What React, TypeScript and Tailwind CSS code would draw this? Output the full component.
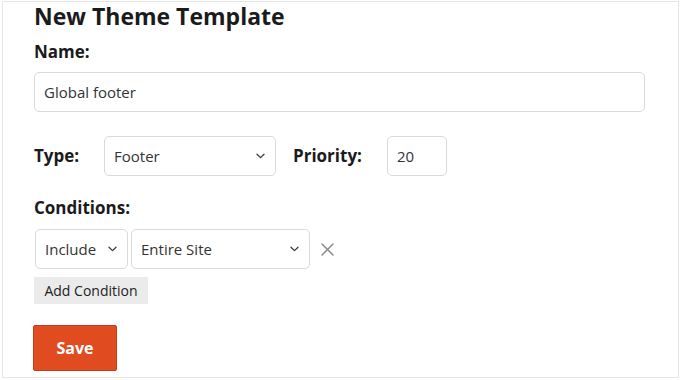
import React from 'react';

function Chevron() {
  return (
    <svg width="9" height="6" viewBox="0 0 9 6" fill="none" className="shrink-0">
      <path d="M1 1.2 L4.5 4.6 L8 1.2" stroke="#3a3a3a" strokeWidth="1.3" strokeLinecap="round" strokeLinejoin="round" />
    </svg>
  );
}

function SelectBox({ value, className }: { value: string; className: string }) {
  return (
    <div
      className={`flex h-10 items-center justify-between rounded-[5px] border border-[#dadada] bg-white pl-[9px] pr-[10px] text-[15px] text-[#333] ${className}`}
    >
      <span>{value}</span>
      <Chevron />
    </div>
  );
}

export default function App() {
  return (
    <div className="h-[380px] w-[680px] bg-white pl-[2px] pt-[1px] font-['Open_Sans','Noto_Sans',sans-serif]">
      <div className="h-[377px] w-[677px] border border-[#e6e6e6] pl-[31px]">
        <h1 className="text-[23px] font-bold leading-[28px] text-[#1b1b1b]">New Theme Template</h1>

        <div className="mt-[10px] text-[17px] font-bold leading-6 text-[#1b1b1b]">Name:</div>
        <div className="mt-2 flex h-10 w-[611px] items-center rounded-[5px] border border-[#dadada] pl-[9px] text-[15px] text-[#333]">
          Global footer
        </div>

        <div className="mt-6 flex h-10 items-center">
          <div className="w-[70px] text-[17px] font-bold text-[#1b1b1b]">Type:</div>
          <SelectBox value="Footer" className="w-[172px]" />
          <div className="ml-[17px] w-[94px] text-[17px] font-bold text-[#1b1b1b]">Priority:</div>
          <div className="flex h-10 w-[60px] items-center rounded-[5px] border border-[#dadada] pl-[9px] text-[15px] text-[#333]">
            20
          </div>
        </div>

        <div className="mt-5 text-[17px] font-bold leading-6 text-[#1b1b1b]">Conditions:</div>
        <div className="mt-[9px] flex items-center">
          <SelectBox value="Include" className="ml-px w-[93px]" />
          <SelectBox value="Entire Site" className="ml-[3px] w-[179px]" />
          <svg width="13" height="13" viewBox="0 0 13 13" className="ml-[11px]">
            <path d="M1 1 L12 12 M12 1 L1 12" stroke="#8a8a8a" strokeWidth="1.5" strokeLinecap="round" />
          </svg>
        </div>

        <button className="mt-2 flex h-[27px] w-[114px] items-center justify-center bg-[#ebebeb] text-[14px] font-medium text-[#222]">
          Add Condition
        </button>

        <button className="-ml-px mt-[21px] flex h-[46px] w-[84px] items-center justify-center rounded-[2px] border border-[#c93d16] bg-[#e04b1f] text-[16px] font-bold text-white">
          Save
        </button>
      </div>
    </div>
  );
}
